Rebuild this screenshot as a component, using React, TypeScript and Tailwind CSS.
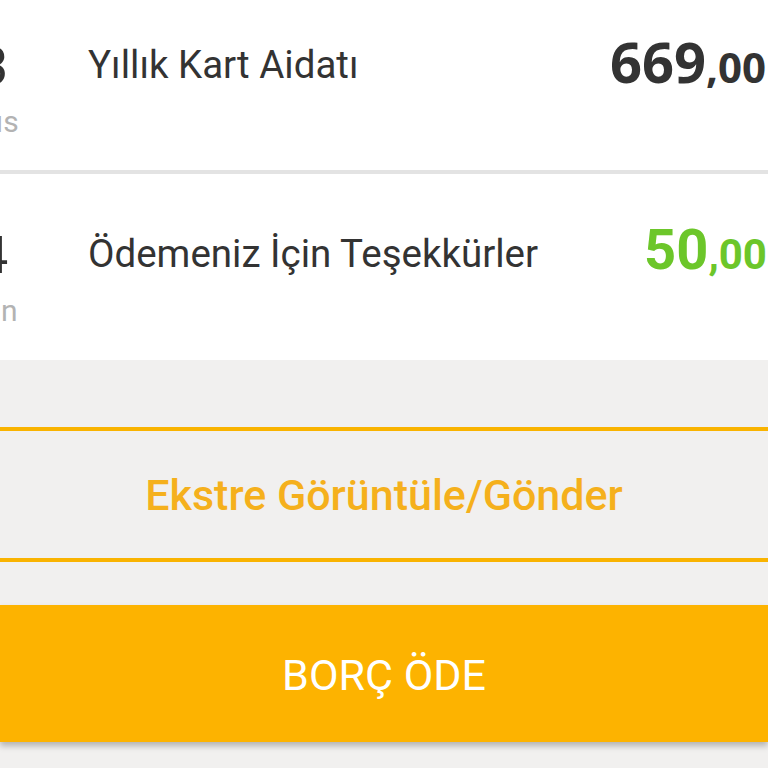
import React from "react";

interface IRow {
  day: string;
  month: string;
  title: string;
  whole: string;
  cents: string;
  amountClass: string;
}

const rows: IRow[] = [
  {
    day: "13",
    month: "Mayıs",
    title: "Yıllık Kart Aidatı",
    whole: "669",
    cents: ",00",
    amountClass: "text-[#333333] font-['Open_Sans',sans-serif]",
  },
  {
    day: "14",
    month: "Nisan",
    title: "Ödemeniz İçin Teşekkürler",
    whole: "50",
    cents: ",00",
    amountClass: "text-[#6cc62a] font-['Roboto',sans-serif]",
  },
];

const Row: React.FC<{ row: IRow; last?: boolean }> = ({ row, last }) => {
  return (
    <div
      className={`flex bg-white ${
        last ? "h-[186px]" : "border-b-4 border-b-[#e3e3e3] h-[189px]"
      }`}
    >
      <div className="w-[100px] -ml-[71px] pt-[52px] flex flex-col items-center shrink-0">
        <p className="text-[52px] leading-[60px] text-[#333333]">{row.day}</p>
        <p className="text-[30px] leading-[36px] mt-[7px] text-[#b3b3b3]">
          {row.month}
        </p>
      </div>
      <div className="flex-1 ml-[59px] pt-[56px]">
        <p className="text-[38.5px] leading-[48px] text-[#333333]">
          {row.title}
        </p>
      </div>
      <div className="-mr-[57px] pt-[40px] shrink-0">
        <p className={`font-bold whitespace-nowrap ${row.amountClass}`}>
          <span className="text-[56px] leading-[72px]">{row.whole}</span>
          <span className="text-[42px] leading-[72px]">{row.cents} TL</span>
        </p>
      </div>
    </div>
  );
};

export default function App() {
  return (
    <div className="w-[768px] h-[768px] overflow-hidden bg-[#f1f0ef] font-['Roboto',sans-serif]">
      <div className="-mt-[15px]">
        <Row row={rows[0]} />
        <Row row={rows[1]} last />
      </div>
      <div className="pt-[67px]">
        <button className="w-full h-[135px] border-y-4 border-[#f9b300] text-[#f5b01c] text-[43px] font-medium flex items-center justify-center pt-[2px]">
          Ekstre Görüntüle/Gönder
        </button>
        <button className="mt-[43px] w-full h-[137px] bg-[#fdb300] text-white text-[43px] flex items-center justify-center pt-[4px] shadow-[0_4px_6px_rgba(0,0,0,0.25)]">
          BORÇ ÖDE
        </button>
      </div>
    </div>
  );
}
